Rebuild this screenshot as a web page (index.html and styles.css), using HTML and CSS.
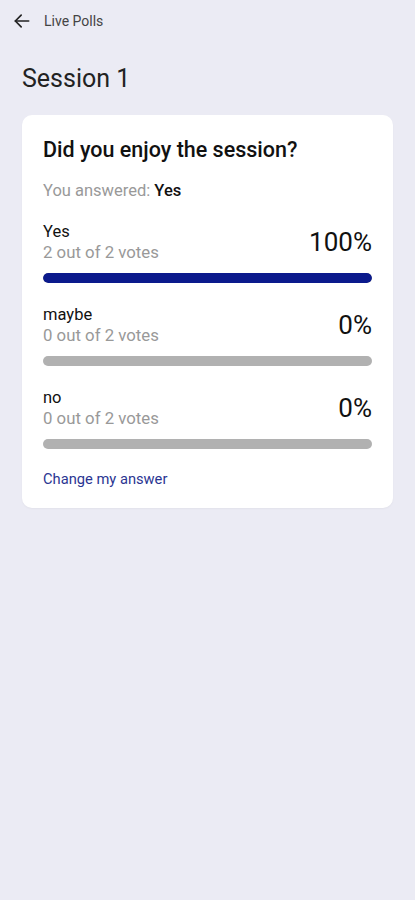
FILE: index.html
```html
<!DOCTYPE html>
<html lang="en">
<head>
  <meta charset="UTF-8">
  <title>Live Polls</title>
  <link rel="stylesheet" href="styles.css">
</head>
<body>

  <!-- Top bar -->
  <div class="top-bar">
    <svg class="back-icon" width="20" height="20" viewBox="0 0 24 24" fill="none" stroke="#222" stroke-width="2" stroke-linecap="round" stroke-linejoin="round">
      <path d="M20 12H4"/>
      <path d="M11 5l-7 7 7 7"/>
    </svg>
    <span>Live Polls</span>
  </div>

  <h1 class="session-title">Session 1</h1>

  <!-- Poll card -->
  <div class="poll-card">
    <h2 class="poll-question">Did you enjoy the session?</h2>
    <p class="poll-answered">You answered: <strong>Yes</strong></p>

    <div class="poll-option">
      <div class="option-head">
        <div class="option-text">
          <div class="option-label">Yes</div>
          <div class="option-votes">2 out of 2 votes</div>
        </div>
        <div class="option-percent">100%</div>
      </div>
      <div class="option-bar"><div class="option-fill" style="width: 100%"></div></div>
    </div>

    <div class="poll-option">
      <div class="option-head">
        <div class="option-text">
          <div class="option-label">maybe</div>
          <div class="option-votes">0 out of 2 votes</div>
        </div>
        <div class="option-percent">0%</div>
      </div>
      <div class="option-bar"><div class="option-fill" style="width: 0%"></div></div>
    </div>

    <div class="poll-option">
      <div class="option-head">
        <div class="option-text">
          <div class="option-label">no</div>
          <div class="option-votes">0 out of 2 votes</div>
        </div>
        <div class="option-percent">0%</div>
      </div>
      <div class="option-bar"><div class="option-fill" style="width: 0%"></div></div>
    </div>

    <a class="change-answer" href="#">Change my answer</a>
  </div>

</body>
</html>
```

FILE: styles.css
```css
body {
  margin: 0;
  background-color: #ebebf4;
  font-family: Roboto, "Noto Sans", sans-serif;
  color: #111;
  min-height: 900px;
}

.top-bar {
  display: flex;
  align-items: center;
  gap: 12px;
  padding: 11px 12px;
  height: 20px;
  font-size: 14px;
  color: #444;
}

.back-icon {
  display: block;
}

.session-title {
  margin: 0;
  padding: 22px 22px 0;
  font-size: 25px;
  font-weight: 400;
  line-height: 30px;
  color: #222;
}

.poll-card {
  margin: 21px 22px 0;
  background-color: #fff;
  border-radius: 10px;
  padding: 22px 21px 20px;
  box-shadow: 0 1px 2px rgba(0,0,0,0.04);
}

.poll-question {
  margin: 0;
  font-size: 21.5px;
  font-weight: 500;
  line-height: 26px;
  color: #111;
}

.poll-answered {
  margin: 18px 0 0;
  font-size: 16.5px;
  line-height: 20px;
  color: #999;
}

.poll-answered strong {
  color: #111;
  font-weight: 500;
}

.poll-option {
  margin-top: 21px;
}

.poll-option + .poll-option {
  margin-top: 22px;
}

.option-head {
  display: flex;
  justify-content: space-between;
  align-items: center;
}

.option-label {
  font-size: 16.5px;
  line-height: 20px;
  color: #111;
}

.option-votes {
  font-size: 16.8px;
  line-height: 20px;
  color: #999;
}

.option-percent {
  font-size: 26px;
  color: #111;
}

.option-bar {
  margin-top: 11px;
  height: 10px;
  border-radius: 5px;
  background-color: #b1b1b1;
  overflow: hidden;
}

.option-fill {
  height: 100%;
  background-color: #0b1a8c;
  border-radius: 5px;
}

.change-answer {
  display: block;
  margin-top: 21px;
  font-size: 14.7px;
  color: #2a3592;
  text-decoration: none;
}
```
